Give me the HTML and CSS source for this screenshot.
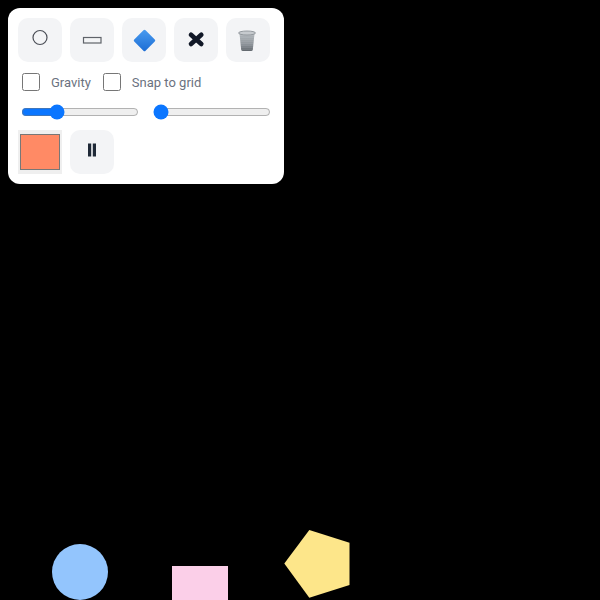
FILE: index.html
```html
<!DOCTYPE html>
<html lang="en">
<head>
<meta charset="utf-8">
<title>Physics playground</title>
<link rel="stylesheet" href="styles.css">
</head>
<body>
<svg class="world" viewBox="0 0 600 600" width="600" height="600" aria-hidden="true">
  <circle cx="80" cy="572" r="28" fill="#93c5fd"/>
  <rect x="172" y="566" width="56" height="34" fill="#fbcfe8"/>
  <polygon points="309.3,530 349.5,542.7 349.5,585 309.3,597.7 284.3,563.5" fill="#fde68a"/>
</svg>
<div class="panel">
  <div class="row">
    <button class="tool" aria-label="Circle">
      <svg class="icon" viewBox="0 0 44 44"><circle cx="22" cy="19.5" r="7" fill="none" stroke="#4b4f57" stroke-width="1.2"/></svg>
    </button>
    <button class="tool" aria-label="Rectangle">
      <svg class="icon" viewBox="0 0 44 44"><rect x="13.5" y="19.5" width="17.5" height="5.5" fill="#f3f4f6" stroke="#5f636a" stroke-width="1.2"/></svg>
    </button>
    <button class="tool" aria-label="Polygon">
      <svg class="icon" viewBox="0 0 44 44">
        <defs><linearGradient id="gem" x1="0" y1="0" x2="1" y2="1"><stop offset="0" stop-color="#4a9cf0"/><stop offset="1" stop-color="#1b6cd4"/></linearGradient></defs>
        <rect x="14.5" y="14.5" width="16" height="16" rx="1.5" fill="url(#gem)" transform="rotate(45 22.5 22.5)"/>
      </svg>
    </button>
    <button class="tool" aria-label="Remove">
      <svg class="icon" viewBox="0 0 44 44"><path d="M17 16.7 L27.3 26 M27.3 16.7 L17 26" fill="none" stroke="#111827" stroke-width="4.6" stroke-linecap="round"/></svg>
    </button>
    <button class="tool" aria-label="Clear">
      <svg class="icon" viewBox="0 0 44 44">
        <defs>
          <linearGradient id="bin" x1="0" y1="0" x2="0" y2="1"><stop offset="0" stop-color="#a9afb4"/><stop offset="0.6" stop-color="#7d848a"/><stop offset="1" stop-color="#474e55"/></linearGradient>
          <pattern id="mesh" width="2" height="2" patternUnits="userSpaceOnUse"><circle cx="1" cy="1" r="0.6" fill="#f3f4f6" opacity="0.8"/></pattern>
        </defs>
        <path d="M13.5 15.5 H28.5 L26.8 31.5 Q26.6 33 25 33 H17 Q15.4 33 15.2 31.5 Z" fill="url(#bin)"/>
        <path d="M13.5 15.5 H28.5 L26.8 31.5 Q26.6 33 25 33 H17 Q15.4 33 15.2 31.5 Z" fill="url(#mesh)"/>
        <ellipse cx="21" cy="15" rx="8.5" ry="2" fill="#c6cace" stroke="#8d9399" stroke-width="0.9"/>
      </svg>
    </button>
  </div>
  <div class="checks">
    <input type="checkbox" id="gravity" class="check">
    <label for="gravity" class="label">Gravity</label>
    <input type="checkbox" id="snap" class="check">
    <label for="snap" class="label">Snap to grid</label>
  </div>
  <div class="sliders">
    <input type="range" class="slider" min="0" max="100" value="27">
    <input type="range" class="slider" min="0" max="100" value="0">
  </div>
  <div class="row">
    <input type="color" class="color" value="#ff8a65">
    <button class="tool" aria-label="Pause">
      <svg class="icon" viewBox="0 0 44 44"><path d="M18 13.5 H21.2 V26.5 H18 Z M22.8 13.5 H26 V26.5 H22.8 Z" fill="#1f2937"/></svg>
    </button>
  </div>
</div>
</body>
</html>
```
FILE: styles.css
```css
html, body {
  margin: 0;
  height: 100%;
  background: #000;
  overflow: hidden;
}
.world {
  position: absolute;
  left: 0;
  top: 0;
  display: block;
}
.panel {
  position: absolute;
  left: 8px;
  top: 8px;
  width: 256px;
  padding: 10px;
  background: #fff;
  border-radius: 12px;
  display: flex;
  flex-direction: column;
  font-family: Roboto, "Noto Sans", sans-serif;
}
.row {
  display: flex;
  gap: 8px;
}
.tool {
  width: 44px;
  height: 44px;
  padding: 0;
  border: none;
  border-radius: 10px;
  background: #f3f4f6;
}
.icon {
  display: block;
  width: 44px;
  height: 44px;
}
.checks {
  display: flex;
  align-items: center;
  margin-top: 9px;
  padding-left: 4px;
  height: 22px;
}
.check {
  width: 18px;
  height: 18px;
  margin: 0;
  accent-color: #0b76ff;
}
.label {
  margin-left: 11px;
  margin-right: 12px;
  padding-top: 2px;
  font-size: 13px;
  line-height: 20px;
  color: #6b7280;
}
.sliders {
  display: flex;
  gap: 14px;
  padding-left: 3px;
  margin-top: 11px;
  margin-bottom: 10px;
}
.slider {
  width: 118px;
  height: 16px;
  margin: 0;
  accent-color: #0b76ff;
}
.color {
  width: 44px;
  height: 44px;
  padding: 0;
  border: none;
  margin: 0;
}
```
